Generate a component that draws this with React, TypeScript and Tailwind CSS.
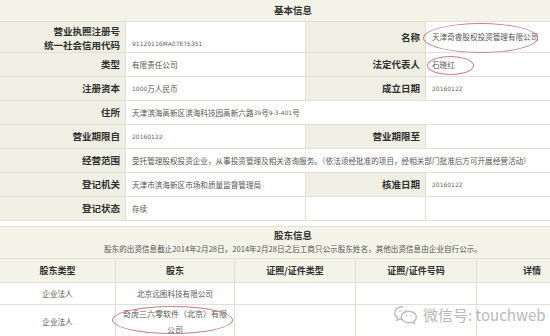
import React from "react";

const CJK = "font-['Noto_Sans_CJK_SC','Noto_Sans',sans-serif]";

const Label = ({ children, className = "" }: { children?: React.ReactNode; className?: string }) => (
  <div
    className={`bg-[#efefe3] flex items-center justify-end pr-[5px] text-[9.5px] font-bold text-[#2f2f2f] ${className}`}
  >
    {children}
  </div>
);

const Value = ({ children, className = "" }: { children?: React.ReactNode; className?: string }) => (
  <div className={`bg-white flex items-center pl-[6px] text-[7.6px] text-[#555] ${className}`}>
    {children}
  </div>
);

const Num = ({ children }: { children: React.ReactNode }) => (
  <span className="font-['DejaVu_Sans',sans-serif] text-[6px] text-[#666]">{children}</span>
);

function WeChatIcon() {
  return (
    <svg width="26" height="20" viewBox="0 0 26 20" fill="none" stroke="#bdbdbd" strokeWidth="1.4">
      <path d="M10 2.5c-4.6 0-8.2 2.9-8.2 6.4 0 2 1.1 3.7 2.9 4.9l-.8 2.5 2.9-1.5c1 .3 2.1.5 3.2.5" />
      <path d="M15.8 7.2c4.2 0 7.6 2.6 7.6 5.8 0 1.8-1 3.3-2.6 4.4l.6 2.1-2.5-1.3c-1 .3-2 .5-3.1.5-4.2 0-7.6-2.6-7.6-5.8s3.4-5.7 7.6-5.7z" />
      <circle cx="7" cy="7" r="0.9" fill="#bdbdbd" stroke="none" />
      <circle cx="12.5" cy="7" r="0.9" fill="#bdbdbd" stroke="none" />
      <circle cx="13.6" cy="11.8" r="0.8" fill="#bdbdbd" stroke="none" />
      <circle cx="18" cy="11.8" r="0.8" fill="#bdbdbd" stroke="none" />
    </svg>
  );
}

export default function App() {
  return (
    <div className={`relative w-[550px] h-[336px] overflow-hidden bg-white ${CJK}`}>
      <div className="w-[586px]">
        {/* 基本信息 */}
        <div className="h-[22px] bg-[#f3f3e8] border-b border-[#e0e0d6] flex items-center justify-center text-[9.5px] font-bold text-[#2f2f2f]">
          基本信息
        </div>
        <div className="grid grid-cols-[125px_179px_119px_160px] grid-rows-[30px_repeat(7,23px)] gap-px bg-[#e0e0d6] border-b border-[#e0e0d6]">
          <Label className="flex-col items-end justify-center leading-[14px]">
            <span>营业执照注册号</span>
            <span>统一社会信用代码</span>
          </Label>
          <Value className="items-end pb-[4px]">
            <Num>91120116MA07E75351</Num>
          </Value>
          <Label>名称</Label>
          <Value>天津奇睿股权投资管理有限公司</Value>

          <Label>类型</Label>
          <Value>有限责任公司</Value>
          <Label>法定代表人</Label>
          <Value>石晓红</Value>

          <Label>注册资本</Label>
          <Value>
            <Num>1000</Num>万人民币
          </Value>
          <Label>成立日期</Label>
          <Value>
            <Num>20160122</Num>
          </Value>

          <Label>住所</Label>
          <Value className="col-span-3">
            天津滨海高新区滨海科技园高新六路<Num>39</Num>号<Num>9-3-401</Num>号
          </Value>

          <Label>营业期限自</Label>
          <Value>
            <Num>20160122</Num>
          </Value>
          <Label>营业期限至</Label>
          <Value />

          <Label>经营范围</Label>
          <Value className="col-span-3 whitespace-nowrap">
            受托管理股权投资企业，从事投资管理及相关咨询服务。（依法须经批准的项目，经相关部门批准后方可开展经营活动）
          </Value>

          <Label>登记机关</Label>
          <Value>天津市滨海新区市场和质量监督管理局</Value>
          <Label>核准日期</Label>
          <Value>
            <Num>20160122</Num>
          </Value>

          <Label>登记状态</Label>
          <Value>存续</Value>
          <Value />
          <Value />
        </div>

        {/* 股东信息 */}
        <div className="mt-[5px] bg-[#f3f3e8] border-t border-[#e0e0d6] h-[32px] flex flex-col items-center justify-center">
          <div className="text-[9.5px] font-bold text-[#2f2f2f] leading-[13px]">股东信息</div>
          <div className="text-[7.6px] text-[#555] leading-[14px]">
            股东的出资信息截止2014年2月28日。2014年2月28日之后工商只公示股东姓名，其他出资信息由企业自行公示。
          </div>
        </div>
        <div className="grid grid-cols-[115px_118px_120px_120px_110px] gap-px bg-[#e0e0d6] border-y border-[#e0e0d6]">
          {["股东类型", "股东", "证照/证件类型", "证照/证件号码", "详情"].map((h) => (
            <div
              key={h}
              className="h-[23px] bg-[#f3f3e8] flex items-center justify-center text-[9px] font-bold text-[#2f2f2f]"
            >
              {h}
            </div>
          ))}
          <div className="h-[21px] bg-white flex items-center justify-center text-[7.6px] text-[#555]">企业法人</div>
          <div className="h-[21px] bg-white flex items-center justify-center text-[7.6px] text-[#555]">北京远图科技有限公司</div>
          <div className="bg-white" />
          <div className="bg-white" />
          <div className="bg-white" />
          <div className="h-[34px] bg-white flex items-center justify-center text-[7.6px] text-[#555]">企业法人</div>
          <div className="h-[34px] bg-white flex items-center justify-center px-[6px] text-center text-[8px] leading-[16px] text-[#555]">
            奇虎三六零软件（北京）有限公司
          </div>
          <div className="bg-white" />
          <div className="bg-white" />
          <div className="bg-white" />
        </div>
      </div>

      {/* red annotation ellipses */}
      <div className="absolute left-[423px] top-[23px] w-[115px] h-[30px] rounded-[50%] border-[1.5px] border-[#c97d8f]" />
      <div className="absolute left-[427px] top-[56px] w-[47px] h-[19px] rounded-[50%] border-[1.5px] border-[#c97d8f]" />
      <div className="absolute left-[112px] top-[306px] w-[121px] h-[28px] rounded-[50%] border-[1.5px] border-[#c97d8f]" />

      {/* watermark */}
      <div className="absolute left-[393px] top-[304px] flex items-center gap-[4px] text-[15px] text-[#b9b9b9] leading-none">
        <WeChatIcon />
        <span>微信号: touchweb</span>
      </div>
    </div>
  );
}
